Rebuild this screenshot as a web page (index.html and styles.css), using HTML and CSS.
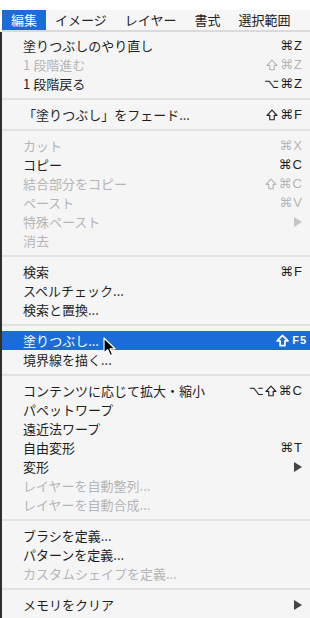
FILE: index.html
```html
<!DOCTYPE html>
<html lang="ja">
<head>
<meta charset="UTF-8" />
<meta name="viewport" content="width=device-width, initial-scale=1" />
<title>編集メニュー</title>
<link rel="stylesheet" href="styles.css">
</head>
<body>
  <nav class="menubar">
    <span class="bar-item open">編集</span>
    <span class="bar-item">イメージ</span>
    <span class="bar-item">レイヤー</span>
    <span class="bar-item">書式</span>
    <span class="bar-item">選択範囲</span>
  </nav>

  <div class="menu">
    <div class="item"><span>塗りつぶしのやり直し</span><span class="key">⌘Z</span></div>
    <div class="item off"><span>1 段階進む</span><span class="key"><svg class="shift" viewBox="0 0 12 12"><path d="M6 1.2 L11 6.4 H8.2 V10.8 H3.8 V6.4 H1 Z"/></svg>⌘Z</span></div>
    <div class="item"><span>1 段階戻る</span><span class="key">⌥⌘Z</span></div>
    <div class="sep"></div>

    <div class="item"><span>「塗りつぶし」をフェード...</span><span class="key"><svg class="shift" viewBox="0 0 12 12"><path d="M6 1.2 L11 6.4 H8.2 V10.8 H3.8 V6.4 H1 Z"/></svg>⌘F</span></div>
    <div class="sep"></div>

    <div class="item off"><span>カット</span><span class="key">⌘X</span></div>
    <div class="item"><span>コピー</span><span class="key">⌘C</span></div>
    <div class="item off"><span>結合部分をコピー</span><span class="key"><svg class="shift" viewBox="0 0 12 12"><path d="M6 1.2 L11 6.4 H8.2 V10.8 H3.8 V6.4 H1 Z"/></svg>⌘C</span></div>
    <div class="item off"><span>ペースト</span><span class="key">⌘V</span></div>
    <div class="item off"><span>特殊ペースト</span><span class="arrow"></span></div>
    <div class="item off"><span>消去</span></div>
    <div class="sep"></div>

    <div class="item"><span>検索</span><span class="key">⌘F</span></div>
    <div class="item"><span>スペルチェック...</span></div>
    <div class="item"><span>検索と置換...</span></div>
    <div class="sep"></div>

    <div class="item active">
      <span>塗りつぶし...</span>
      <span class="key small"><svg class="shift bold" viewBox="0 0 12 12"><path d="M6 1.2 L11 6.4 H8.2 V10.8 H3.8 V6.4 H1 Z"/></svg>F5</span>
      <svg class="cursor" width="13" height="20" viewBox="0 0 13 20">
        <path d="M1 1 L1 16 L4.6 12.6 L7.2 18.6 L9.6 17.6 L7.1 11.8 L12 11.8 Z" fill="#000" stroke="#fff" stroke-width="1.2" stroke-linejoin="round"/>
      </svg>
    </div>
    <div class="item"><span>境界線を描く...</span></div>
    <div class="sep"></div>

    <div class="item"><span>コンテンツに応じて拡大・縮小</span><span class="key">⌥<svg class="shift" viewBox="0 0 12 12"><path d="M6 1.2 L11 6.4 H8.2 V10.8 H3.8 V6.4 H1 Z"/></svg>⌘C</span></div>
    <div class="item"><span>パペットワープ</span></div>
    <div class="item"><span>遠近法ワープ</span></div>
    <div class="item"><span>自由変形</span><span class="key">⌘T</span></div>
    <div class="item"><span>変形</span><span class="arrow"></span></div>
    <div class="item off"><span>レイヤーを自動整列...</span></div>
    <div class="item off"><span>レイヤーを自動合成...</span></div>
    <div class="sep"></div>

    <div class="item"><span>ブラシを定義...</span></div>
    <div class="item"><span>パターンを定義...</span></div>
    <div class="item off"><span>カスタムシェイプを定義...</span></div>
    <div class="sep"></div>

    <div class="item"><span>メモリをクリア</span><span class="arrow"></span></div>
  </div>
</body>
</html>
```

FILE: styles.css
```css
body {
  margin: 0;
  background: #fff;
  font-family: "Noto Sans CJK JP", "Noto Sans", sans-serif;
  font-size: 13px;
  color: #1f1f1f;
  overflow: hidden;
}
.menubar {
  display: flex;
  margin: 10px 0 0 2px;
  height: 20px;
  line-height: 20px;
  background: #f6f6f6;
  border-bottom: 2px solid #dadada;
}
.bar-item {
  padding: 0 9px;
  color: #222;
}
.bar-item.open {
  background: #1b6bd9;
  color: #fff;
}
.menu {
  background: #f5f5f5;
  border-left: 2px solid #2e2e2e;
  padding-top: 4px;
  min-height: 600px;
}
.item {
  position: relative;
  display: flex;
  justify-content: space-between;
  align-items: center;
  height: 19px;
  line-height: 19px;
  padding: 0 7px 0 21px;
  white-space: nowrap;
}
.item.off {
  color: #b5b5b5;
}
.item.active {
  background: #1b6bd9;
  color: #fff;
}
.key {
  display: flex;
  align-items: center;
  font-family: "Liberation Sans", "DejaVu Sans", sans-serif;
  font-size: 13px;
  letter-spacing: 1px;
}
.key.small {
  font-size: 11px;
  font-weight: bold;
  margin-right: -4px;
}
.shift {
  width: 12px;
  height: 12px;
  margin-right: 2px;
  fill: none;
  stroke: currentColor;
  stroke-width: 1.1;
  stroke-linejoin: round;
}
.shift.bold {
  width: 13px;
  height: 13px;
  stroke-width: 1.6;
  margin-right: 3px;
}
.arrow {
  width: 0;
  height: 0;
  margin-right: 1px;
  border-top: 5px solid transparent;
  border-bottom: 5px solid transparent;
  border-left: 8px solid #444;
}
.item.off .arrow {
  border-left-color: #c4c4c4;
}
.sep {
  height: 12px;
  display: flex;
  align-items: center;
}
.sep::after {
  content: "";
  display: block;
  width: 100%;
  height: 2px;
  background: #e2e2e2;
}
.cursor {
  position: absolute;
  left: 101px;
  top: 6px;
}
```
